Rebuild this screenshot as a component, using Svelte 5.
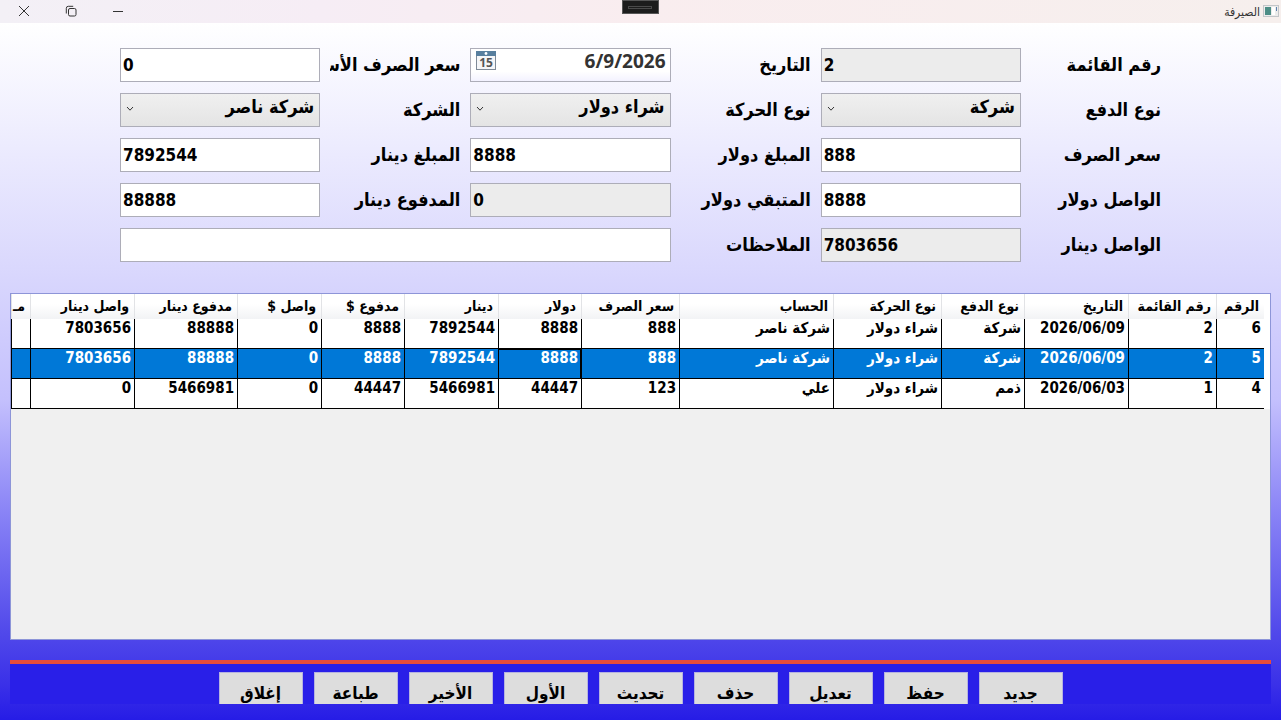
<script>
  const cols = [
    ['الرقم', 48], ['رقم القائمة', 88], ['التاريخ', 104], ['نوع الدفع', 83],
    ['نوع الحركة', 108], ['الحساب', 154], ['سعر الصرف', 98], ['دولار', 83],
    ['دينار', 94], ['مدفوع $', 83], ['واصل $', 84], ['مدفوع دينار', 103],
    ['واصل دينار', 104], ['مـ', 19]
  ];
  const rows = [
    ['6', '2', '2026/06/09', 'شركة', 'شراء دولار', 'شركة ناصر', '888', '8888', '7892544', '8888', '0', '88888', '7803656', ''],
    ['5', '2', '2026/06/09', 'شركة', 'شراء دولار', 'شركة ناصر', '888', '8888', '7892544', '8888', '0', '88888', '7803656', ''],
    ['4', '1', '2026/06/03', 'ذمم', 'شراء دولار', 'علي', '123', '44447', '5466981', '44447', '0', '5466981', '0', '']
  ];
  const selected = 1;
  const focusedCol = 7;
  const fields = [
    { id: 'listNo', label: 'رقم القائمة', value: '2', ro: true },
    { id: 'date', label: 'التاريخ', value: '6/9/2026', kind: 'date' },
    { id: 'baseRate', label: 'سعر الصرف الأسـ', value: '0' },
    { id: 'payType', label: 'نوع الدفع', value: 'شركة', kind: 'select' },
    { id: 'moveType', label: 'نوع الحركة', value: 'شراء دولار', kind: 'select' },
    { id: 'company', label: 'الشركة', value: 'شركة ناصر', kind: 'select' },
    { id: 'rate', label: 'سعر الصرف', value: '888' },
    { id: 'usd', label: 'المبلغ دولار', value: '8888' },
    { id: 'iqd', label: 'المبلغ دينار', value: '7892544' },
    { id: 'usdIn', label: 'الواصل دولار', value: '8888' },
    { id: 'usdLeft', label: 'المتبقي دولار', value: '0', ro: true },
    { id: 'iqdPaid', label: 'المدفوع دينار', value: '88888' },
    { id: 'iqdIn', label: 'الواصل دينار', value: '7803656', ro: true },
    { id: 'notes', label: 'الملاحظات', value: '', wide: true }
  ];
  const actions = ['جديد', 'حفظ', 'تعديل', 'حذف', 'تحديث', 'الأول', 'الأخير', 'طباعة', 'إغلاق'];
</script>

<div class="window" dir="rtl">
  <header>
    <svg class="app-icon" width="16" height="12" viewBox="0 0 16 12" aria-hidden="true">
      <rect x=".5" y=".5" width="15" height="11" fill="#ececec" stroke="#c3c6c9" />
      <rect x="2" y="2" width="6" height="8" fill="#4c8d86" />
      <rect x="9" y="2" width="3" height="8" fill="#fff" />
      <rect x="13" y="2" width="1" height="4" fill="#5b80ad" />
    </svg>
    <h1>الصيرفة</h1>
    <div class="controls">
      <button aria-label="تصغير"><svg width="12" height="12" viewBox="0 0 12 12"><path d="M1 6.5H11" /></svg></button>
      <button aria-label="استعادة"><svg width="12" height="12" viewBox="0 0 12 12"><rect x="3.5" y="3.5" width="7.5" height="7.5" rx="1.5" /><path d="M1.3 8.5V3.3Q1.3 1.3 3.3 1.3H8.2" /></svg></button>
      <button aria-label="إغلاق النافذة"><svg width="12" height="12" viewBox="0 0 12 12"><path d="M1 1L11 11M11 1L1 11" /></svg></button>
    </div>
    <div class="handle"><span></span></div>
  </header>

  <main>
    <form>
      {#each fields as f}
        <label for={f.id}>{f.label}</label>
        {#if f.kind === 'select'}
          <div class="field select">
            <select id={f.id}><option>{f.value}</option></select>
            <svg width="8" height="6" viewBox="0 0 8 6" aria-hidden="true"><path d="M1 1L4 4.2L7 1" /></svg>
          </div>
        {:else if f.kind === 'date'}
          <div class="field date">
            <input id={f.id} value={f.value} />
            <svg width="20" height="19" viewBox="0 0 20 19" aria-hidden="true">
              <rect x=".5" y="1" width="19" height="17.5" fill="#f5f6f8" stroke="#7f8a97" />
              <rect x="0" y="0" width="20" height="5" fill="#587f9e" />
              <circle cx="10" cy="2.5" r="1.4" fill="#fff" />
              <text x="10" y="16" text-anchor="middle">15</text>
            </svg>
          </div>
        {:else}
          <input class="field" class:wide={f.wide} id={f.id} value={f.value} dir="ltr" readonly={f.ro} />
        {/if}
      {/each}
    </form>

    <section class="grid">
      <table>
        <colgroup>
          {#each cols as c}<col style="width:{c[1] / 12.53}%" />{/each}
        </colgroup>
        <thead><tr>{#each cols as c}<th>{c[0]}</th>{/each}</tr></thead>
        <tbody>
          {#each rows as r, i}
            <tr class:selected={i === selected}>
              {#each r as v, j}
                <td class:focused={i === selected && j === focusedCol}>{v}</td>
              {/each}
            </tr>
          {/each}
        </tbody>
      </table>
    </section>

    <footer>
      {#each actions as a}<button>{a}</button>{/each}
    </footer>
  </main>
</div>

<style>
  :global(body) { margin: 0; }
  * { box-sizing: border-box; }
  .window {
    min-height: 100vh;
    display: flex;
    flex-direction: column;
    font-family: "DejaVu Sans Condensed", "DejaVu Sans", sans-serif;
    color: #000;
  }
  header {
    position: relative;
    display: flex;
    align-items: center;
    gap: 3px;
    height: 23px;
    padding-right: 2px;
    background: linear-gradient(90deg, #f3f0f6, #f6edf5 25%, #f9edef 50%, #f6efed);
  }
  h1 { margin: 0; font-size: 12px; line-height: 20px; font-weight: 400; color: #333; }
  .controls { display: flex; margin-right: auto; }
  .controls button {
    width: 47px;
    height: 22px;
    padding: 0;
    border: 0;
    background: none;
    display: flex;
    align-items: center;
    justify-content: center;
  }
  header > .app-icon, .controls button { margin-bottom: 1px; }
  .controls svg, .select svg { fill: none; stroke: #333; }
  .handle {
    position: absolute;
    top: 0;
    left: 50%;
    width: 37px;
    height: 14px;
    margin-left: -19px;
    background: #1c1c1c;
    border: 1px solid #555;
    display: flex;
    align-items: center;
    justify-content: center;
  }
  .handle span { width: 24px; height: 3px; border: 1px solid #4a4a4a; }
  main {
    flex: 1;
    display: flex;
    flex-direction: column;
    padding: 25px 10px 16px;
    background: linear-gradient(#fff, #d9d7fd 36%, #c4c0fd 54%, #8a84f6 70%, #4f47ea 88%, #3a30e8 95%, #261ce6);
  }
  form {
    display: grid;
    grid-template-columns: repeat(3, minmax(0, 130fr) minmax(0, 200fr));
    gap: 11px 10px;
    padding: 0 110px;
  }
  label {
    height: 34px;
    overflow: hidden;
    white-space: nowrap;
    font-size: 18px;
    line-height: 34px;
    font-weight: 700;
  }
  .field {
    min-width: 0;
    width: 100%;
    height: 34px;
    border: 1px solid #adadb8;
    border-radius: 0;
    background: #fff;
    font: 700 17px/32px "DejaVu Sans Condensed", "DejaVu Sans", sans-serif;
    color: #000;
    outline: 0;
  }
  input.field { padding: 0 2px; }
  input[readonly] { background: #ececec; }
  .wide { grid-column: span 3; }
  .select, .date { position: relative; }
  .field.select { background: linear-gradient(#f0f0f0, #e4e4e4); }
  select, .date input {
    width: 100%;
    height: 26px;
    border: 0;
    padding: 0 5px;
    background: none;
    font: inherit;
    line-height: 26px;
    color: inherit;
    appearance: none;
    display: block;
    outline: 0;
  }
  select { font-size: 18px; }
  .field.date { background: linear-gradient(#fff 70%, #f3f2ff); }
  .date input { height: 24px; color: #333; padding: 0 4px; font: 700 19px/24px "Noto Sans", sans-serif; }
  .select svg { position: absolute; left: 5px; top: 12px; }
  .date svg { position: absolute; left: 5px; top: 2px; }
  .date text { font: 700 12px "Noto Sans", sans-serif; fill: #555; }
  .grid {
    flex: 1;
    margin-top: 31px;
    padding: 0 6px 0 0;
    border: 1px solid #8d95d8;
    background: linear-gradient(#fff, #fff) right top / 6px 115px no-repeat #f0f0f0;
    overflow: hidden;
  }
  table { width: 100%; table-layout: fixed; border-collapse: separate; border-spacing: 0; }
  th, td {
    padding: 0 3px;
    white-space: nowrap;
    text-align: right;
    vertical-align: top;
    font-weight: 700;
  }
  th {
    height: 25px;
    padding: 0 5px;
    font-size: 14px;
    line-height: 25px;
    background: linear-gradient(#fff 40%, #f2f3f5);
    border-left: 1px solid #e2e3e6;
  }
  td {
    height: 30px;
    font-size: 15px;
    line-height: 19px;
    background: #fff;
    border-left: 1px solid #000;
    border-bottom: 1px solid #000;
  }
  .selected td { background: #0078d7; color: #fff; }
  .selected .focused { box-shadow: inset -1px 1px #000; }
  footer {
    display: flex;
    justify-content: center;
    gap: 11px;
    height: 44px;
    margin-top: 20px;
    padding-top: 8px;
    border-top: 4px solid #e74c3c;
    background: #291fe8;
  }
  footer button {
    width: 84px;
    height: 32px;
    padding: 4px 0 0;
    border: 1px solid #b5b3e0;
    border-bottom: 0;
    overflow: hidden;
    background: #ddd;
    color: #000;
    font: 700 17px/32px "DejaVu Sans Condensed", "DejaVu Sans", sans-serif;
  }
</style>
